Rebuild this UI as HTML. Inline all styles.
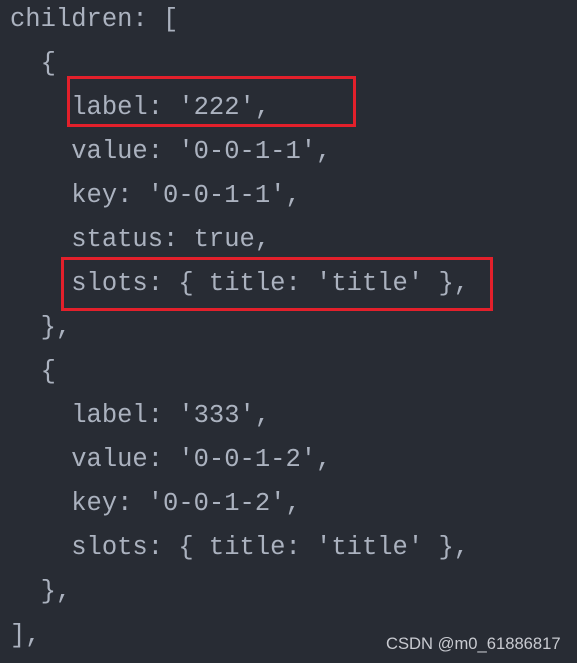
<!DOCTYPE html>
<html><head><style>
html,body{margin:0;padding:0;}
body{width:577px;height:663px;background:#282c34;position:relative;overflow:hidden;}
pre{margin:0;position:absolute;left:10px;top:-2px;font-family:"Liberation Mono",monospace;font-size:25.5px;line-height:44px;color:#abb2bf;}
.box{position:absolute;border:3px solid #e3202b;box-sizing:border-box;}
.wm{position:absolute;left:386px;top:634px;font-family:"Liberation Sans",sans-serif;font-size:16.6px;color:#c8cad0;}
</style></head><body>
<pre>children: [
  {
    label: '222',
    value: '0-0-1-1',
    key: '0-0-1-1',
    status: true,
    slots: { title: 'title' },
  },
  {
    label: '333',
    value: '0-0-1-2',
    key: '0-0-1-2',
    slots: { title: 'title' },
  },
],</pre>
<div class="box" style="left:67px;top:76px;width:289px;height:51px"></div>
<div class="box" style="left:61px;top:257px;width:432px;height:54px"></div>
<div class="wm">CSDN @m0_61886817</div>
</body></html>
